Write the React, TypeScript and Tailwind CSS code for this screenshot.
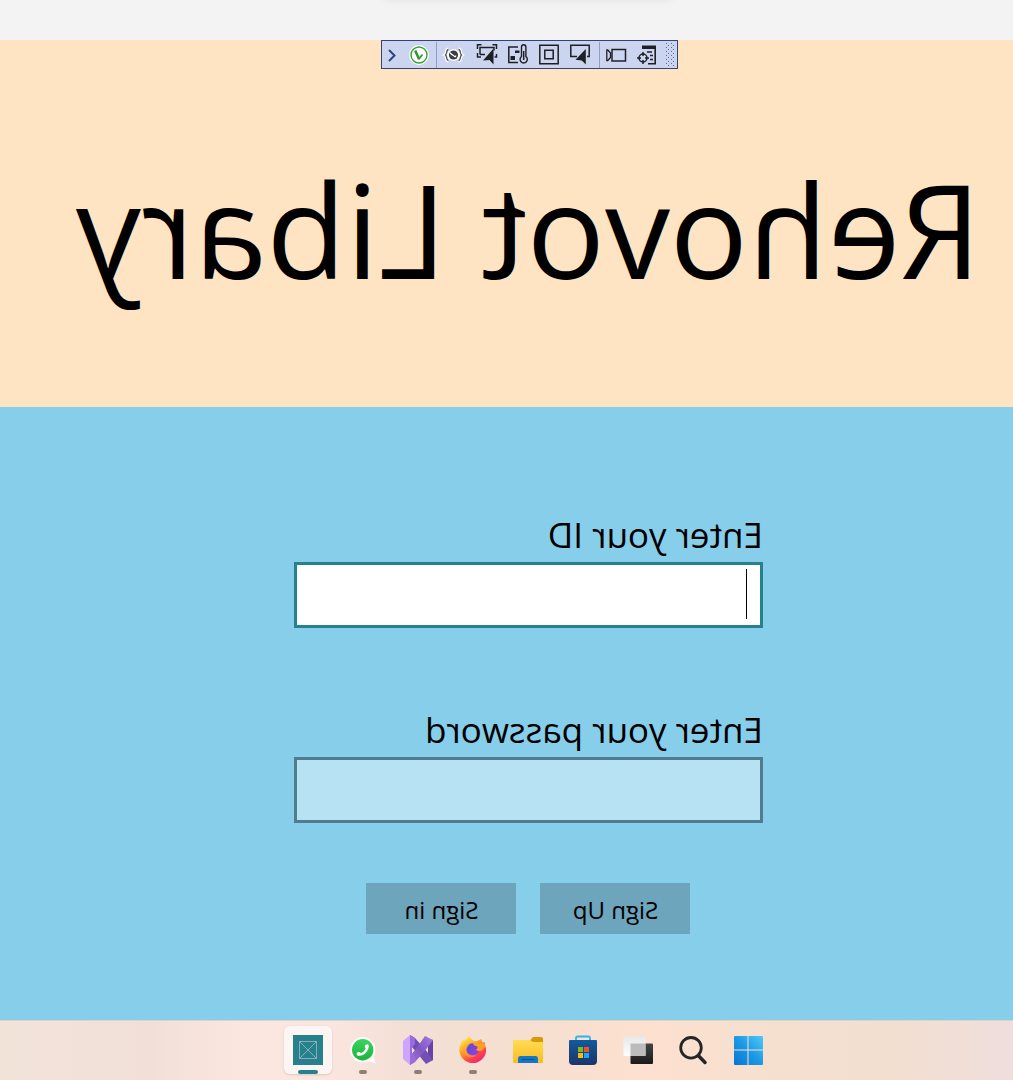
import type { ReactNode } from "react";

const ink = "#1f2024";

function ToolIcon({ children }: { children: ReactNode }) {
  return (
    <svg width="24" height="24" viewBox="0 0 24 24" fill="none" stroke={ink} strokeWidth="1.5" className="shrink-0" aria-hidden="true">
      {children}
    </svg>
  );
}

const tools: { name: string; icon: ReactNode }[] = [
  {
    name: "Select element",
    icon: (
      <>
        <path d="M2.500 6V1.800H6.500M17.500 1.800h4V6M2.500 10v4H6" />
        <path d="M5 11.500V4.500h14v3M5 11.500h5M21.500 11v3h-2" />
        <path d="M18.500 5.500v16l-4-4.500-6.500.5z" fill={ink} stroke="none" />
      </>
    ),
  },
  {
    name: "Display layout adorners",
    icon: (
      <>
        <path d="M12 4H2.800v15.600H12" />
        <path d="M9 7.500h4.500V10H9zM4.500 13H9v4H4.500z" fill={ink} stroke="none" />
        <path d="M15.500 13.500V4a2.200 2.200 0 0 1 4.400 0v9.500a3.600 3.600 0 1 1-4.400 0z" strokeWidth="1.400" />
        <path d="M17.700 8v9" />
      </>
    ),
  },
  {
    name: "Track focused element",
    icon: (
      <>
        <path d="M2.800 2.300h18.400v18.400H2.800z" />
        <path d="M7.800 7.300h8.400v8.400H7.800z" />
      </>
    ),
  },
  {
    name: "Select in page",
    icon: (
      <>
        <path d="M9 13.500H2.800V2.300h18.400V13.500H19" />
        <path d="M17.800 6v15.500l-4-4-6.300-.7z" fill={ink} stroke="none" />
      </>
    ),
  },
];

const captureTools: { name: string; icon: ReactNode }[] = [
  {
    name: "Record",
    icon: (
      <>
        <path d="M8 6.500h13.500V18H8z" />
        <path d="M2.800 7v10.500h1L6.500 14.500V10L3.800 7z" strokeWidth="1.300" />
      </>
    ),
  },
  {
    name: "Inspector settings",
    icon: (
      <>
        <path d="M7 2.500h14V6H7z" fill={ink} stroke="none" />
        <path d="M20.200 5v16.500M13 20.800h8" strokeWidth="1.600" />
        <path d="M12 9h5M15 12.500h3M15 16.500h3" strokeWidth="1.300" />
        <circle cx="8" cy="15" r="4" />
        <path d="M8 9v4M8 17v4M2 15h4M10 15h4" strokeWidth="1.500" />
      </>
    ),
  },
];

function DebugToolbar() {
  return (
    <div role="toolbar" aria-label="Debug tools" className="flex h-[29px] items-center border border-[#35427a] bg-[#ccd5f0]">
      <button aria-label="Expand" className="flex w-5 justify-center">
        <svg width="10" height="14" viewBox="0 0 10 14" fill="none" stroke="#35427a" strokeWidth="2" aria-hidden="true">
          <path d="M2 2l5.500 5.500L2 13" />
        </svg>
      </button>
      <button aria-label="Binding status" className="flex w-[34px] justify-center">
        <ToolIcon>
          <circle cx="12" cy="12" r="10" fill="#fff" stroke="none" />
          <circle cx="12" cy="12" r="8" stroke="#37a137" strokeWidth="1.400" />
          <path d="M8.200 7.500l3.800 8.500" stroke="#2b992b" strokeWidth="2.500" />
          <path d="M11.500 16.500l4-5" stroke="#2b992b" strokeWidth="1.800" />
        </ToolIcon>
      </button>
      <span className="h-[26px] w-px bg-[#8f9fcd]" />
      <button aria-label="Hot reload" className="flex w-[34px] justify-center">
        <ToolIcon>
          <path d="M6.500 6.500c-2.500 0-1 4-3 5.500 2 1.500.5 5.500 3 5.500M16.500 6.500c2.500 0 1 4 3 5.500-2 1.500-.5 5.500-3 5.500" stroke="#fff" strokeWidth="4" />
          <circle cx="11.500" cy="12" r="6" fill="#fff" stroke="none" />
          <path d="M6.500 6.500c-2.500 0-1 4-3 5.500 2 1.500.5 5.500 3 5.500M16.500 6.500c2.500 0 1 4 3 5.500-2 1.500-.5 5.500-3 5.500" stroke="#55565c" strokeWidth="1.400" />
          <circle cx="11.500" cy="12" r="4.600" fill="#3b3c40" stroke="none" />
          <path d="M8 9.500c1 2.500 3 2 4 3.500s1.500.5 2-.5" stroke="#fff" strokeWidth="1.300" />
        </ToolIcon>
      </button>
      {tools.map((t) => (
        <button key={t.name} aria-label={t.name} className="flex w-[31px] justify-center">
          <ToolIcon>{t.icon}</ToolIcon>
        </button>
      ))}
      <span className="ml-1 h-[26px] w-px bg-[#8f9fcd]" />
      {captureTools.map((t) => (
        <button key={t.name} aria-label={t.name} className="flex w-[31px] justify-center">
          <ToolIcon>{t.icon}</ToolIcon>
        </button>
      ))}
      <svg width="15" height="24" viewBox="0 0 15 24" fill="#5c689a" aria-hidden="true">
        {[0, 1, 2, 3, 4, 5].map((r) => (
          <g key={r}>
            <rect x="4" y={r * 4} width="1" height="1" />
            <rect x="9" y={r * 4} width="1" height="1" />
            <rect x="6" y={2 + r * 4} width="1" height="1" />
            <rect x="11" y={2 + r * 4} width="1" height="1" />
          </g>
        ))}
      </svg>
    </div>
  );
}

type AppState = "active" | "running" | "idle";

const apps: { name: string; state: AppState; icon: ReactNode }[] = [
  {
    name: "Library app",
    state: "active",
    icon: (
      <>
        <path d="M0 0h30v30H0z" fill="#26818f" />
        <path d="M6.500 6.500h17v17h-17zl17 17M23.500 6.500l-17 17" fill="none" stroke="#8fadb0" strokeWidth="1" />
      </>
    ),
  },
  {
    name: "WhatsApp",
    state: "running",
    icon: (
      <>
        <path d="M15 2a12.800 12.800 0 1 0 5.500 24.300l7 1.900-2-6.700A12.800 12.800 0 0 0 15 2z" fill="#fff" />
        <circle cx="14.700" cy="14.700" r="10.700" fill="url(#wa)" />
        <path d="M19.500 9.200l-2.300.8c-.6.3-.6 2.200.1 2.800.5.500.3.900-.3 1.900-.9 1.400-2 2.300-3.400 3-.8.400-1.100.3-1.700-.4-.6-.700-2.300-.3-2.800.3-.8 1-.8 2.300.3 2.800 2.600 1.200 6.200-.2 8.600-2.900 2.300-2.600 3.400-5.700 2.500-7.700-.2-.4-.5-.7-1-.6z" fill="#fff" />
      </>
    ),
  },
  {
    name: "Visual Studio",
    state: "running",
    icon: (
      <>
        <path d="M25 4l5 1v20l-5 2z" fill="#6842a5" />
        <path d="M7 0l5 3 11.500 13 6.500 9-7 4-14-17z" fill="#7250b3" />
        <path d="M22 1l8 4-9 12-9 10-5 3-1-8 7-8z" fill="url(#vs)" />
        <path d="M7 0l5 3v6l-3 3v6l3 4v5l-5 3z" fill="#9a6cdb" />
        <path d="M0 6l7-6v30l-7-6z" fill="#cda5ff" />
      </>
    ),
  },
  {
    name: "Firefox",
    state: "running",
    icon: (
      <>
        <path d="M3.500 7c.5-1 1.500-2 2-2.500l.5 2C7.500 4 9.500 2.500 11.500 1c.5 2.500 2.500 4 5 5 1.500.5 2.500 0 3.500-.5L23.500 4l.5 3 3 .5v3c1.800 3.500 1.500 8-1 11.500A13.500 13.500 0 0 1 1.300 16c0-3.500.7-6.500 2.200-9z" fill="url(#fox)" />
        <circle cx="14.500" cy="14.500" r="6.300" fill="url(#globe)" />
        <path d="M14.500 8c1.500 1 4 .5 5.500-.500l7 1c.7 4-2 7.500-6 7.500-1.500 0-2.500-.5-3-1.200 1.500-.8 2-2.300 1.200-3.500-1.700 0-3.700-1-4.700-3.300z" fill="#ff9f25" />
        <path d="M4 12c2-2.500 5-3.500 8-2-2 .7-2.500 2.500-3.500 4 0 5 5 7.500 10 5.500-2 4-9 4-12 0-1.700-2.300-2.300-4.500-2.500-7.500z" fill="#ffb02c" opacity=".5" />
      </>
    ),
  },
  {
    name: "File Explorer",
    state: "idle",
    icon: (
      <>
        <path d="M16 7l3-4q.7-1 2-1h7q2 0 2 2v6H16z" fill="#d79a05" />
        <path d="M0 6q0-1 1-1h16l3 2h9q1 0 1 1v20H1q-1 0-1-1z" fill="url(#folder)" />
        <path d="M5 28v-4.500Q5 21 7.500 21h15q2.500 0 2.500 2.500V28z" fill="#1478c7" />
        <path d="M8.500 24.500h13" stroke="#0b5290" strokeWidth="1.200" />
      </>
    ),
  },
  {
    name: "Microsoft Store",
    state: "idle",
    icon: (
      <>
        <path d="M8 7V3q0-1.500 1.500-1.500h11Q22 1.500 22 3v4" fill="none" stroke="#29b5f2" strokeWidth="1.800" />
        <path d="M1 6q0-1 1-1h26q1 0 1 1v20q0 4-4 4H5q-4 0-4-4z" fill="url(#store)" />
        <path d="M10 12h5v5h-5z" fill="#82b817" />
        <path d="M16 12h5v5h-5z" fill="#ee5127" />
        <path d="M10 18h5v5h-5z" fill="#fbb916" />
        <path d="M16 18h5v5h-5z" fill="#18a8f1" />
      </>
    ),
  },
  {
    name: "Task View",
    state: "idle",
    icon: (
      <>
        <rect x="7.500" y="8.500" width="22.500" height="20.500" rx="1" fill="url(#dark)" />
        <rect x="0.500" y="1.500" width="22" height="19.500" rx="1" fill="url(#light)" />
        <rect x="7.500" y="8.500" width="15" height="12.500" fill="#bcbcbc" />
      </>
    ),
  },
  {
    name: "Search",
    state: "idle",
    icon: (
      <>
        <circle cx="13" cy="12.800" r="10.300" fill="none" stroke="#242628" strokeWidth="2.800" />
        <path d="M20.500 20.800l6.500 6.700" stroke="#242628" strokeWidth="3.500" strokeLinecap="round" />
      </>
    ),
  },
  {
    name: "Start",
    state: "idle",
    icon: (
      <path d="M2 1h12.500v13.500H1V2q0-1 1-1zM15.500 1H29q1 0 1 1v12.500H15.500zM1 15.500h13.500V30H2q-1 0-1-1zM15.500 15.500H30V29q0 1-1 1H15.500z" fill="url(#win)" />
    ),
  },
];

function Gradients() {
  return (
    <svg width="0" height="0" className="absolute" aria-hidden="true">
      <defs>
        <linearGradient id="wa" x2="0" y2="1"><stop stopColor="#3ad65d" /><stop offset="1" stopColor="#1cb23c" /></linearGradient>
        <linearGradient id="vs" x1="1" x2="0" y2="1"><stop stopColor="#a57ae4" /><stop offset=".5" stopColor="#7f58bf" /><stop offset="1" stopColor="#a379e0" /></linearGradient>
        <linearGradient id="fox" x1=".15" x2=".8" y2="1"><stop offset=".1" stopColor="#ffe43c" /><stop offset=".45" stopColor="#ff9329" /><stop offset=".7" stopColor="#ff4646" /><stop offset="1" stopColor="#e92084" /></linearGradient>
        <linearGradient id="globe" x2="1" y2="1"><stop stopColor="#5548d8" /><stop offset="1" stopColor="#9c3fe0" /></linearGradient>
        <linearGradient id="folder" x2="0" y2="1"><stop stopColor="#ffdc55" /><stop offset="1" stopColor="#f9bc20" /></linearGradient>
        <linearGradient id="store" x2="0" y2="1"><stop stopColor="#115a9d" /><stop offset="1" stopColor="#1d3566" /></linearGradient>
        <linearGradient id="dark" x2="0" y2="1"><stop stopColor="#444" /><stop offset="1" stopColor="#1a1a1a" /></linearGradient>
        <linearGradient id="light" x2="0" y2="1"><stop stopColor="#e8e8e8" /><stop offset="1" stopColor="#fdfdfd" /></linearGradient>
        <linearGradient id="win" x1="1" x2="0" y2="1"><stop stopColor="#4ccbfb" /><stop offset=".5" stopColor="#1d98e4" /><stop offset="1" stopColor="#0674d2" /></linearGradient>
      </defs>
    </svg>
  );
}

const tile: Record<AppState, string> = {
  active: "rounded-md bg-white/60 shadow-sm",
  running: "",
  idle: "",
};

const marker: Record<AppState, string> = {
  active: "w-5 bg-[#26818f]",
  running: "w-2 bg-[#8a7f79]",
  idle: "w-2",
};

function Taskbar() {
  return (
    <nav aria-label="Taskbar" className="flex h-[60px] items-center justify-center gap-[7px] bg-[linear-gradient(90deg,#f2e3d9_0%,#f2e0d8_15%,#fce7e0_25%,#fae6df_33%,#f3dfd5_40%,#f5dfd1_50%,#fde0cf_65%,#f5e0d0_76%,#f3dfd0_88%,#efdedd_100%)] pl-[42px] inset-shadow-[0_1px_0_#e0d0c8]">
      <Gradients />
      {apps.map((a) => (
        <button key={a.name} aria-label={a.name} className={`relative flex size-12 items-center justify-center ${tile[a.state]}`}>
          <svg width="30" height="30" viewBox="0 0 30 30" aria-hidden="true">{a.icon}</svg>
          <span className={`absolute bottom-0 h-1 rounded-full ${marker[a.state]}`} />
        </button>
      ))}
    </nav>
  );
}

export default function App() {
  return (
    <div className="flex min-h-screen flex-col bg-[#87ceeb] font-['Open_Sans','Noto_Sans',sans-serif] text-black">
      <div className="flex h-10 justify-center overflow-hidden bg-[#f3f3f3] pl-11">
        <div className="-mt-2 h-2 w-72 rounded-lg shadow-[0_0_8px_rgba(0,0,0,0.08)]" />
      </div>
      <header className="relative bg-[#ffe4c4] pt-[99px] pb-[88px] pl-11">
        <div className="absolute inset-x-0 top-0 flex justify-center pl-[46px]">
          <DebugToolbar />
        </div>
        <h1 className="-scale-x-100 text-center text-[130px] leading-[180px] whitespace-nowrap">Rehovot Libary</h1>
      </header>
      <main className="flex flex-1 justify-center pl-11">
        <form className="w-[469px] pt-[103px] pb-[86px]" onSubmit={(e) => e.preventDefault()}>
          <label htmlFor="reader-id" className="mb-0.5 block -scale-x-100 text-[35px] leading-[50px]">Enter your ID</label>
          <div className="relative">
            <input id="reader-id" type="text" className="block h-[66px] w-full -scale-x-100 border-3 border-[#26818f] bg-white px-3 text-[35px] outline-none" />
            <span className="absolute top-[7px] right-4 h-[50px] w-px bg-black" />
          </div>
          <label htmlFor="reader-password" className="mt-[77px] mb-0.5 block -scale-x-100 text-[35px] leading-[50px]">Enter your password</label>
          <input id="reader-password" type="password" className="block h-[66px] w-full -scale-x-100 border-3 border-[#517c8d] bg-[#b7e2f3] px-3 text-[35px] outline-none" />
          <div className="mt-[60px] flex -scale-x-100 justify-center gap-6">
            <button type="button" className="h-[51px] w-[150px] bg-[#6ca5bc] pt-0.5 text-2xl">Sign Up</button>
            <button type="submit" className="h-[51px] w-[150px] bg-[#6ca5bc] pt-0.5 text-2xl">Sign in</button>
          </div>
        </form>
      </main>
      <Taskbar />
    </div>
  );
}
